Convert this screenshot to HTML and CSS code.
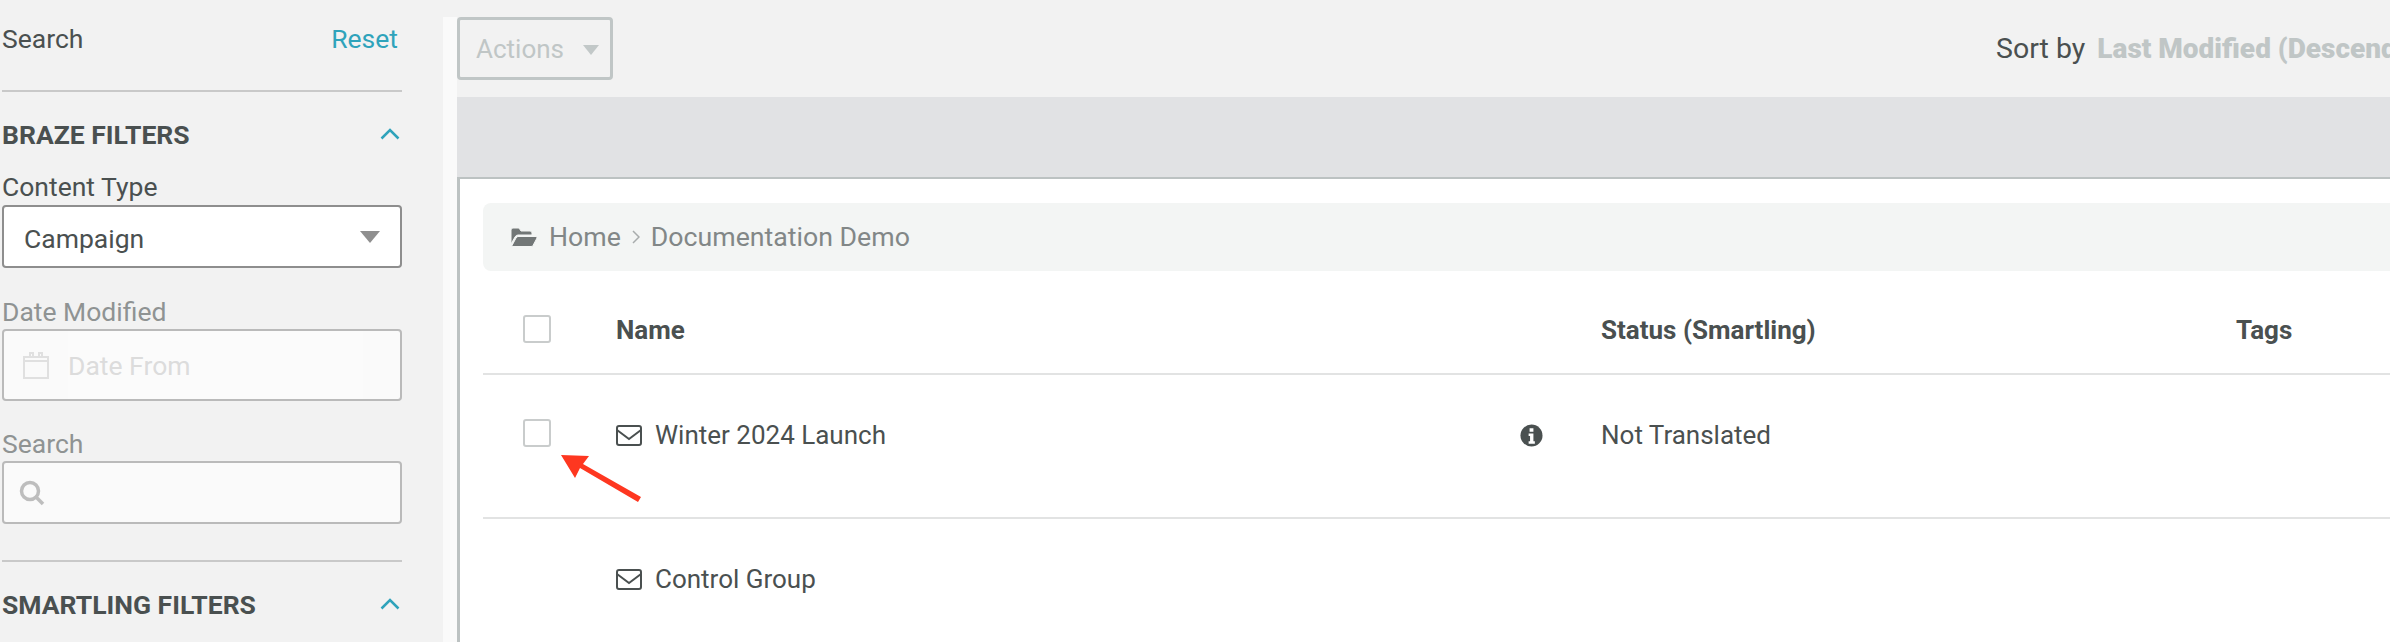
FILE: index.html
```html
<!DOCTYPE html>
<html lang="en">
<head>
    <meta charset="UTF-8">
    <meta name="viewport" content="width=device-width, initial-scale=1.0">
    <title>Content</title>
    <link rel="stylesheet" href="styles.css">
</head>
<body>
    <div class="page">
        <aside class="sidebar">
            <div class="search-head">
                <span>Search</span>
                <a class="reset">Reset</a>
            </div>

            <div class="filter-title first">
                <span>BRAZE FILTERS</span>
                <svg class="chevron" viewBox="0 0 20 12"><path d="M1.5 10.5L10 2l8.500 8.500"/></svg>
            </div>
            <div class="field-label">Content Type</div>
            <div class="select">
                <span class="select-value">Campaign</span>
                <i class="caret"></i>
            </div>

            <div class="field-label muted date-label">Date Modified</div>
            <div class="input input-date">
                <svg class="calendar" viewBox="0 0 26 28"><path d="M1 6h24v21H1zM7 6V2h3v4M16 6V2h3v4M1 10h24"/></svg>
                <div class="date-from">Date From</div>
            </div>

            <div class="field-label muted search-label">Search</div>
            <div class="input input-search">
                <svg class="magnifier" viewBox="0 0 26 26"><circle cx="11" cy="11" r="8.500"/><path d="M17 17l7 7"/></svg>
            </div>

            <div class="filter-title second">
                <span>SMARTLING FILTERS</span>
                <svg class="chevron" viewBox="0 0 20 12"><path d="M1.5 10.5L10 2l8.500 8.500"/></svg>
            </div>
        </aside>

        <main class="main">
            <div class="toolbar">
                <div class="actions">Actions <i class="caret small"></i></div>
                <div class="sort">Sort by <b>Last Modified (Descending)</b></div>
            </div>
            <div class="band"></div>
            <section class="panel">
                <div class="crumbs">
                    <svg class="folder" viewBox="0 0 26 20"><path d="M0 3q0-2 2-2h6l2 3h9q2 0 2 2v2H7q-2 0-3 2L0 17z"/><path d="M7 9.500h18q1.500 0 1 1.500l-4 7.500q-.5 1-2 1H2q-1.500 0-1-1l4-7.500q1-1.500 2-1.500z"/></svg>
                    <span>Home</span>
                    <svg class="crumb-sep" viewBox="0 0 8 14"><path d="M1 1l6 6-6 6"/></svg>
                    <span>Documentation Demo</span>
                </div>

                <div class="row head">
                    <div><i class="check"></i></div>
                    <div class="cell">Name</div>
                    <div class="cell">Status (Smartling)</div>
                    <div class="cell">Tags</div>
                </div>

                <div class="row item">
                    <div><i class="check"></i></div>
                    <div class="cell name">
                        <span class="name-text">
                            <svg class="envelope" viewBox="0 0 26 21"><rect x="1" y="1" width="24" height="19" rx="2"/><path d="M1 5l12 9 12-9"/></svg>
                            Winter 2024 Launch
                        </span>
                        <svg class="info" viewBox="0 0 24 24"><circle cx="12" cy="12" r="11.500"/><path class="info-i" d="M10 4.500h4v3.500h-4zM9 10h5v8h1.500v2.500h-6.500V18h1.500v-5.500H9z"/></svg>
                    </div>
                    <div class="cell">Not Translated</div>
                    <div class="cell"></div>
                </div>

                <div class="row item last">
                    <div></div>
                    <div class="cell name">
                        <span class="name-text">
                            <svg class="envelope" viewBox="0 0 26 21"><rect x="1" y="1" width="24" height="19" rx="2"/><path d="M1 5l12 9 12-9"/></svg>
                            Control Group
                        </span>
                    </div>
                    <div class="cell"></div>
                    <div class="cell"></div>
                </div>
            </section>
        </main>
    </div>

    <svg class="arrow" viewBox="0 0 82 50"><path d="M1 1l28 1-6 8 58 33-3 5-58-34-5 10z"/></svg>
</body>
</html>
```

FILE: styles.css
```css
html, body {
    margin: 0;
    height: 100%;
    overflow: hidden;
}
body {
    font-family: Roboto, "Liberation Sans", sans-serif;
    font-size: 26px;
    color: #4a5050;
    background-color: #f2f2f2;
}
.page {
    display: flex;
    height: 642px;
    width: 2390px;
}

/* left column */
.sidebar {
    width: 400px;
    margin-left: 2px;
    margin-right: 41px;
    flex: none;
    font-size: 26.5px;
}
.search-head {
    display: flex;
    justify-content: space-between;
    align-items: center;
    box-sizing: border-box;
    height: 92px;
    padding-right: 4px;
    padding-bottom: 14px;
    border-bottom: 2px solid #c9c9c9;
}
.reset {
    color: #2fa3bb;
}
.filter-title {
    display: flex;
    justify-content: space-between;
    align-items: center;
    font-weight: 700;
    font-size: 26.5px;
    height: 32px;
}
.filter-title.first {
    margin-top: 26px;
}
.filter-title.second {
    padding-top: 26px;
    border-top: 2px solid #c9c9c9;
}
.chevron {
    width: 20px;
    height: 12px;
    margin-right: 2px;
    fill: none;
    stroke: #2fa3bb;
    stroke-width: 2.5;
}
.field-label {
    height: 32px;
    line-height: 32px;
}
.first + .field-label {
    margin-top: 21px;
}
.muted {
    color: #8f9393;
}
.date-label {
    margin-top: 28px;
}
.search-label {
    margin-top: 27px;
}
.select {
    display: flex;
    justify-content: space-between;
    align-items: center;
    box-sizing: border-box;
    height: 63px;
    margin-top: 2px;
    padding: 0 20px;
    background-color: #fff;
    border: 2px solid #8e8e8e;
    border-radius: 4px;
}
.select-value {
    padding-top: 3px;
}
.caret {
    display: inline-block;
    border-left: 10px solid transparent;
    border-right: 10px solid transparent;
    border-top: 12px solid #8f8f8f;
}
.caret.small {
    border-left-width: 8px;
    border-right-width: 8px;
    border-top-width: 10px;
    border-top-color: #c2c8c8;
    margin-left: 13px;
    vertical-align: 3px;
}
.input {
    display: flex;
    align-items: center;
    box-sizing: border-box;
    background-color: #fafafa;
    border: 2px solid #bababa;
    border-radius: 4px;
}
.input-date {
    height: 72px;
    margin-top: 1px;
    padding-left: 19px;
}
.input-search {
    height: 63px;
    margin-top: 1px;
    margin-bottom: 36px;
    padding-left: 15px;
}
.calendar {
    width: 26px;
    height: 28px;
    flex: none;
    fill: none;
    stroke: #e0e0e0;
    stroke-width: 2;
}
.date-from {
    width: 295px;
    height: 100%;
    margin-left: 19px;
    line-height: 70px;
    color: #dcdcdc;
    background-color: #fbfbfb;
}
.magnifier {
    width: 26px;
    height: 26px;
    fill: none;
    stroke: #bdbdbd;
    stroke-width: 3.500;
}

/* right column */
.main {
    flex: 1;
    min-width: 0;
    margin-top: 17px;
    border-left: 14px solid #fafafa;
}
.toolbar {
    display: flex;
    justify-content: space-between;
    align-items: center;
    height: 63px;
    margin-bottom: 17px;
}
.actions {
    box-sizing: border-box;
    width: 156px;
    height: 63px;
    padding-left: 16px;
    line-height: 58px;
    color: #c0c6c6;
    border: 3px solid #c0c6c6;
    border-radius: 4px;
}
.sort {
    width: 394px;
    flex: none;
    overflow: hidden;
    white-space: nowrap;
    font-size: 28.5px;
}
.sort b {
    margin-left: 5px;
    font-weight: 900;
    font-size: 28px;
    color: #c0c6c6;
}
.band {
    height: 80px;
    background-color: #e1e2e4;
}
.panel {
    height: 463px;
    padding: 24px 0 0 23px;
    background-color: #fff;
    border-top: 2px solid #bcc2c2;
    border-left: 3px solid #bcc2c2;
}
.crumbs {
    display: flex;
    align-items: center;
    height: 68px;
    padding-left: 28px;
    font-size: 26.7px;
    color: #828787;
    background-color: #f3f5f4;
    border-radius: 8px 0 0 8px;
}
.folder {
    width: 26px;
    height: 20px;
    margin-right: 12px;
    fill: #727777;
    stroke: #f3f5f4;
    stroke-width: 1;
}
.crumb-sep {
    width: 8px;
    height: 14px;
    margin: 0 11px;
    fill: none;
    stroke: #a8acac;
    stroke-width: 1.500;
}
.row {
    display: grid;
    grid-template-columns: 93px 985px 635px 1fr;
    padding-left: 40px;
    box-sizing: border-box;
    border-bottom: 2px solid #e2e3e3;
}
.row.head {
    height: 104px;
    padding-top: 44px;
    font-weight: 700;
}
.row.item {
    height: 144px;
    padding-top: 44px;
}
.row.item.last {
    border-bottom: none;
}
.cell {
    line-height: 32px;
    margin-top: 0;
}
.name {
    display: flex;
    justify-content: space-between;
    align-items: center;
    height: 32px;
    padding-right: 58px;
}
.row.head .cell {
    margin-top: -1px;
}
.name-text {
    display: flex;
    align-items: center;
    gap: 13px;
}
.check {
    display: block;
    box-sizing: border-box;
    width: 28px;
    height: 28px;
    background-color: #fff;
    border: 2px solid #c9cccc;
    border-radius: 3px;
}
.envelope {
    width: 26px;
    height: 21px;
    flex: none;
    fill: none;
    stroke: #4a5050;
    stroke-width: 2;
}
.info {
    width: 23px;
    height: 23px;
}
.info circle {
    fill: #4a5050;
}
.info-i {
    fill: #fff;
}
.arrow {
    position: absolute;
    left: 560px;
    top: 454px;
    width: 82px;
    height: 50px;
    fill: #fe3720;
}
```
